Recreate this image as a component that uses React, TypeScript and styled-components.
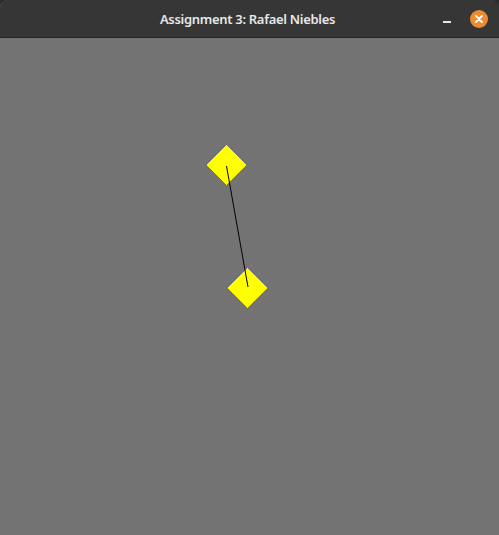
import React from 'react';
import styled, { createGlobalStyle } from 'styled-components';

const GlobalStyle = createGlobalStyle`
  html, body {
    margin: 0;
    padding: 0;
    background: #2b2b2b;
    overflow: hidden;
  }
`;

const Window = styled.div`
  width: 499px;
  height: 535px;
  display: flex;
  flex-direction: column;
  border-top-left-radius: 8px;
  border-top-right-radius: 8px;
  overflow: hidden;
  background: #737373;
  box-shadow: inset -1px 0 0 #111;
`;

const TitleBar = styled.header`
  height: 37px;
  flex: none;
  display: grid;
  grid-template-columns: 1fr auto 1fr;
  align-items: center;
  background: #363636;
  border-bottom: 1px solid #262626;
  font-family: 'Noto Sans', 'Open Sans', sans-serif;
`;

const Title = styled.h1`
  grid-column: 2;
  margin: 0;
  font-size: 13px;
  font-weight: 600;
  color: #e8e8e8;
  letter-spacing: -0.3px;
  transform: translateX(-2px);
`;

const Controls = styled.div`
  grid-column: 3;
  justify-self: end;
  display: flex;
  align-items: center;
  gap: 14px;
  padding-right: 11px;
`;

const ControlButton = styled.button<{ $close?: boolean }>`
  width: 18px;
  height: 18px;
  padding: 0;
  border: none;
  border-radius: 50%;
  display: flex;
  align-items: center;
  justify-content: center;
  background: ${({ $close }) => ($close ? '#ef8a2e' : 'transparent')};
`;

const Canvas = styled.main`
  flex: 1;
  background: #737373;
`;

type Point = { x: number; y: number };

const nodes: Point[] = [
  { x: 226, y: 127 },
  { x: 247, y: 250 },
];

const Diamond = ({ x, y }: Point) => (
  <polygon
    points={`${x},${y - 20} ${x + 20},${y} ${x},${y + 20} ${x - 20},${y}`}
    fill="#ffff00"
  />
);

export default function App() {
  const [a, b] = nodes;
  return (
    <>
      <GlobalStyle />
      <Window>
        <TitleBar>
          <Title>Assignment 3: Rafael Niebles</Title>
          <Controls>
            <ControlButton aria-label="minimize">
              <svg width="10" height="10" viewBox="0 0 10 10">
                <rect x="1" y="7" width="8" height="2" fill="#e8e8e8" />
              </svg>
            </ControlButton>
            <ControlButton $close aria-label="close">
              <svg width="10" height="10" viewBox="0 0 10 10">
                <path d="M2 2 L8 8 M8 2 L2 8" stroke="#fff" strokeWidth="2" strokeLinecap="round" />
              </svg>
            </ControlButton>
          </Controls>
        </TitleBar>
        <Canvas>
          <svg width="499" height="497" viewBox="0 0 499 497" shapeRendering="crispEdges">
            {nodes.map((n, i) => (
              <Diamond key={i} {...n} />
            ))}
            <line
              x1={a.x + 0.5}
              y1={a.y + 1}
              x2={b.x + 1}
              y2={b.y - 1}
              stroke="#000"
              strokeWidth="1"
              shapeRendering="auto"
            />
          </svg>
        </Canvas>
      </Window>
    </>
  );
}
